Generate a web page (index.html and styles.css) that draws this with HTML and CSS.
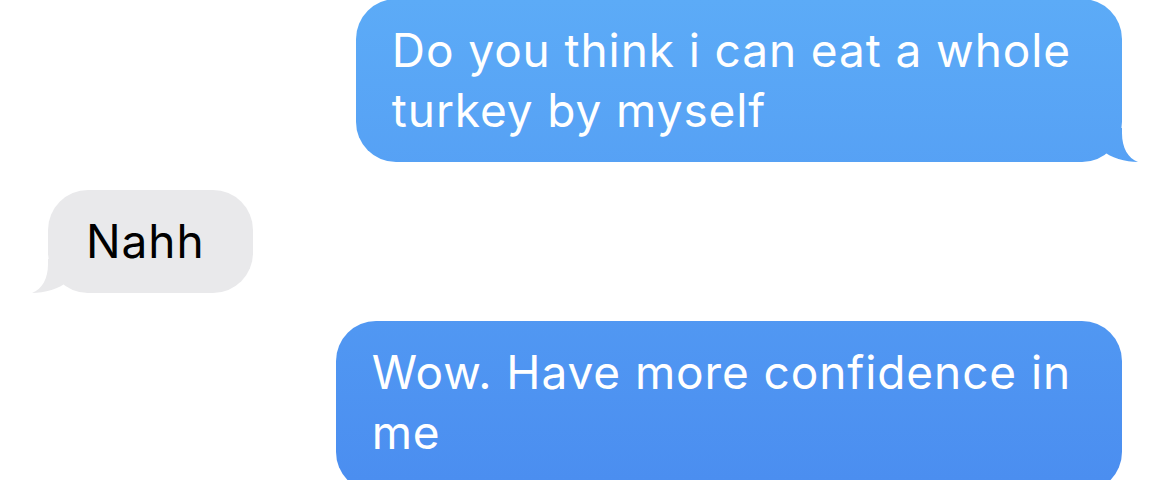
FILE: index.html
```html
<!DOCTYPE html>
<html lang="en">
<head>
<meta charset="utf-8">
<title>Messages</title>
<link rel="stylesheet" href="styles.css">
</head>
<body>
<main class="thread">
  <div class="bubble sent tail first">Do you think i can eat a whole<br>turkey by myself</div>
  <div class="bubble received tail">Nahh</div>
  <div class="bubble sent last">Wow. Have more confidence in<br>me</div>
</main>
</body>
</html>
```

FILE: styles.css
```css
html, body {
  margin: 0;
  padding: 0;
  background: #ffffff;
}

body {
  width: 1170px;
  height: 480px;
  overflow: hidden;
  font-family: "Inter", "Liberation Sans", sans-serif;
}

.thread {
  display: flex;
  flex-direction: column;
  gap: 28px;
  padding: 0 48px;
}

.bubble {
  position: relative;
  font-size: 46px;
  line-height: 60px;
  letter-spacing: 0.9px;
  padding: 21px 51px 22px 36px;
  border-radius: 40px;
  white-space: nowrap;
}

.bubble.first {
  margin-top: -1px;
}

.bubble.last {
  padding-bottom: 30px;
}

.sent {
  align-self: flex-end;
  color: #ffffff;
  background: linear-gradient(180deg, #5cabf7 0px, #4b8ef0 480px) fixed;
}

.received {
  align-self: flex-start;
  color: #000000;
  background: #e9e9eb;
  padding-left: 38px;
  padding-right: 48px;
}

.tail::before {
  content: "";
  position: absolute;
  bottom: 0;
  width: 60px;
  height: 34px;
  background: inherit;
}

.sent.tail::before {
  right: -16px;
  clip-path: path("M0,0 L44,0 L44,5 C44,20 50,30 60,34 C48,34 32,30 24,22 C18,29 10,33 0,34 Z");
}

.received.tail::before {
  left: -16px;
  clip-path: path("M60,0 L16,0 L16,5 C16,20 10,30 0,34 C12,34 28,30 36,22 C42,29 50,33 60,34 Z");
}
```
